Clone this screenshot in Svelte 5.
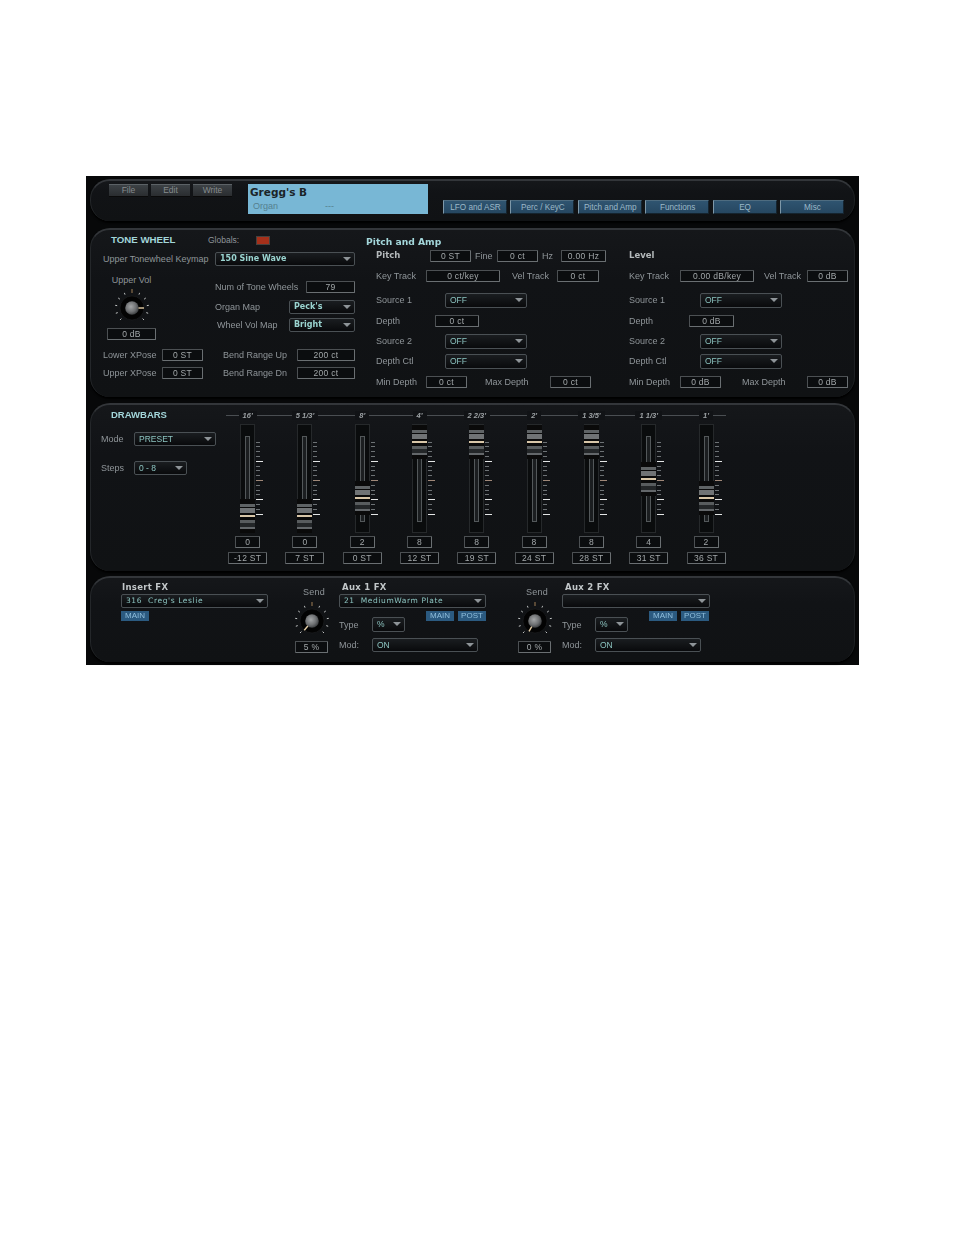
<script>
    const tabs = ['LFO and ASR', 'Perc / KeyC', 'Pitch and Amp', 'Functions', 'EQ', 'Misc'];
    const ticks = Array.from({ length: 16 }, (_, i) => i);
    const dial = Array.from({ length: 11 }, (_, i) => -135 + i * 27);

    const drawbars = [
        { name: "16'", value: 0, st: '-12 ST' },
        { name: "5 1/3'", value: 0, st: '7 ST' },
        { name: "8'", value: 2, st: '0 ST' },
        { name: "4'", value: 8, st: '12 ST' },
        { name: "2 2/3'", value: 8, st: '19 ST' },
        { name: "2'", value: 8, st: '24 ST' },
        { name: "1 3/5'", value: 8, st: '28 ST' },
        { name: "1 1/3'", value: 4, st: '31 ST' },
        { name: "1'", value: 2, st: '36 ST' }
    ];

    // handle centre inside the 109px slot, 8 = top of travel
    const handleTop = (v) => 74.6 - v * 9.3;
</script>

{#snippet lab(text, w, ml = 0)}
    <span class="lab" style="width:{w}px;margin-left:{ml}px">{text}</span>
{/snippet}

{#snippet field(text, w)}
    <span class="field" style="width:{w}px">{text}</span>
{/snippet}

{#snippet select(text, w)}
    <span class="select" style="width:{w}px">{text}</span>
{/snippet}

{#snippet knob(angle)}
    <svg class="knob" width="40" height="40" viewBox="-20 -20 40 40">
        <defs>
            <radialGradient id="cap" cx="0.42" cy="0.4" r="0.65">
                <stop offset="0" stop-color="#a4a6a7" />
                <stop offset="0.6" stop-color="#6d6f71" />
                <stop offset="1" stop-color="#333537" />
            </radialGradient>
        </defs>
        {#each dial as a}
            <line
                x1="0" y1="-15" x2="0" y2={a === 0 ? -19 : -17}
                stroke={a === 0 ? '#b08a5c' : '#c9cccc'}
                stroke-width="0.9"
                transform="rotate({a})"
            />
        {/each}
        <circle r="12" fill="#030303" stroke="#1e2022" stroke-width="0.6" />
        <circle r="6.8" fill="url(#cap)" />
        <line x1="0" y1="-6.5" x2="0" y2="-12" stroke="#e6cfa6" stroke-width="1.4" transform="rotate({angle})" />
    </svg>
{/snippet}

{#snippet ampRows(k)}
    <div class="row">{@render lab('Key Track', k.keyL)}{@render field(k.key, 74)}{@render lab('Vel Track', k.velL, k.velM)}{@render field(k.vel, k.velW)}</div>
    <div class="row">{@render lab('Source 1', k.srcL)}{@render select('OFF', 82)}</div>
    <div class="row">{@render lab('Depth', k.depL)}{@render field(k.dep, k.depW)}</div>
    <div class="row">{@render lab('Source 2', k.srcL)}{@render select('OFF', 82)}</div>
    <div class="row">{@render lab('Depth Ctl', k.srcL)}{@render select('OFF', 82)}</div>
    <div class="row">{@render lab('Min Depth', k.keyL)}{@render field(k.dep, 41)}{@render lab('Max Depth', 65, k.maxM)}{@render field(k.dep, 41)}</div>
{/snippet}

<div class="page">
    <div class="synth">
        <!-- Patch bar -->
        <section class="panel top">
            <div class="menu">
                <span class="btn">File</span>
                <span class="btn">Edit</span>
                <span class="btn">Write</span>
            </div>
            <div class="display">
                <div class="patch">Gregg's B</div>
                <div class="cat"><span>Organ</span><span>---</span></div>
            </div>
            <div class="tabs">
                {#each tabs as t}
                    <span class="tab">{t}</span>
                {/each}
            </div>
        </section>

        <!-- Tone wheel, pitch and level -->
        <section class="panel tone">
            <div class="tw">
                <div class="tw-head">
                    <span class="title tw-title">TONE WHEEL</span>
                    <span class="lab globals">Globals:</span>
                    <span class="led"></span>
                </div>
                <div class="row keymap">
                    {@render lab('Upper Tonewheel Keymap', 113)}
                    <span class="select strong" style="width:140px">150 Sine Wave</span>
                </div>
                <div class="tw-mid">
                    <div class="vol">
                        <span class="lab vol-lab">Upper Vol</span>
                        {@render knob(90)}
                        {@render field('0 dB', 49)}
                    </div>
                    <div class="maps">
                        <div class="row">{@render lab('Num of Tone Wheels', 91)}{@render field('79', 49)}</div>
                        <div class="row">{@render lab('Organ Map', 74)}<span class="select strong" style="width:66px">Peck's</span></div>
                        <div class="row wheel">{@render lab('Wheel Vol Map', 72)}<span class="select strong" style="width:66px">Bright</span></div>
                    </div>
                </div>
                <div class="row xpose">{@render lab('Lower XPose', 60)}{@render field('0 ST', 41)}{@render lab('Bend Range Up', 74, 20)}{@render field('200 ct', 58)}</div>
                <div class="row xpose">{@render lab('Upper XPose', 60)}{@render field('0 ST', 41)}{@render lab('Bend Range Dn', 74, 20)}{@render field('200 ct', 58)}</div>
            </div>

            <div class="pitch">
                <div class="title sub pitch-title">Pitch and Amp</div>
                <div class="amp">
                    <div class="row">
                        <span class="head" style="width:54px">Pitch</span>
                        {@render field('0 ST', 41)}
                        {@render lab('Fine', 22, 4)}
                        {@render field('0 ct', 41)}
                        {@render lab('Hz', 19, 4)}
                        {@render field('0.00 Hz', 45)}
                    </div>
                    {@render ampRows({ keyL: 50, key: '0 ct/key', velL: 45, velM: 12, vel: '0 ct', velW: 42, srcL: 69, depL: 59, dep: '0 ct', depW: 44, maxM: 18 })}
                </div>
            </div>

            <div class="level">
                <div class="amp">
                    <div class="row"><span class="head">Level</span></div>
                    {@render ampRows({ keyL: 51, key: '0.00 dB/key', velL: 43, velM: 10, vel: '0 dB', velW: 41, srcL: 71, depL: 60, dep: '0 dB', depW: 45, maxM: 21 })}
                </div>
            </div>
        </section>

        <!-- Drawbars -->
        <section class="panel bars">
            <div class="bars-left">
                <div class="title bars-title">DRAWBARS</div>
                <div class="row mode">{@render lab('Mode', 33)}{@render select('PRESET', 82)}</div>
                <div class="row steps">{@render lab('Steps', 33)}{@render select('0 - 8', 53)}</div>
            </div>
            <div class="bars-grid">
                {#each drawbars as d}
                    <span class="bar-name"><i>{d.name}</i></span>
                {/each}
                {#each drawbars as d}
                    <div class="fader">
                        <div class="slot">
                            <div class="rail"></div>
                            <div class="ticks">
                                {#each ticks as t}
                                    <span class="tick" class:major={t === 4 || t === 12 || t === 15} class:mid={t === 8}></span>
                                {/each}
                            </div>
                            <div class="handle" style="top:{handleTop(d.value)}px"></div>
                        </div>
                        {@render field(String(d.value), 25)}
                        <span class="st">{@render field(d.st, 39)}</span>
                    </div>
                {/each}
            </div>
        </section>

        <!-- Effects -->
        <section class="panel fx">
            <div class="fx-col insert">
                <div class="fx-title">Insert FX</div>
                <span class="select fx-sel" style="width:147px">316&nbsp; Creg's Leslie</span>
                <div class="tags left"><span class="tag">MAIN</span></div>
            </div>

            <div class="send first">
                <span class="lab send-lab">Send</span>
                {@render knob(-140)}
                {@render field('5 %', 33)}
            </div>

            <div class="fx-col aux">
                <div class="fx-title">Aux 1 FX</div>
                <span class="select fx-sel" style="width:147px">21&nbsp; MediumWarm Plate</span>
                <div class="tags"><span class="tag">MAIN</span><span class="tag">POST</span></div>
                <div class="row type">{@render lab('Type', 33)}{@render select('%', 33)}</div>
                <div class="row modrow">{@render lab('Mod:', 33)}{@render select('ON', 106)}</div>
            </div>

            <div class="send second">
                <span class="lab send-lab">Send</span>
                {@render knob(-150)}
                {@render field('0 %', 33)}
            </div>

            <div class="fx-col aux">
                <div class="fx-title">Aux 2 FX</div>
                <span class="select fx-sel" style="width:148px"></span>
                <div class="tags"><span class="tag">MAIN</span><span class="tag">POST</span></div>
                <div class="row type">{@render lab('Type', 33)}{@render select('%', 33)}</div>
                <div class="row modrow">{@render lab('Mod:', 33)}{@render select('ON', 106)}</div>
            </div>
        </section>
    </div>
</div>

<style>
    :global(body) {
        margin: 0;
        background: #fff;
    }

    .page {
        height: 1235px;
        padding: 176px 0 0 86px;
        box-sizing: border-box;
        font-family: "Liberation Sans", Arial, sans-serif;
    }

    .synth {
        width: 773px;
        height: 489px;
        box-sizing: border-box;
        padding: 3px 4px;
        background: #070809;
        display: flex;
        flex-direction: column;
        filter: blur(0.35px);
    }

    .panel {
        width: 765px;
        box-sizing: border-box;
        display: flex;
        border-top: 2px solid #33363a;
        border-left: 1px solid #24272a;
        border-right: 1px solid #1d2023;
        border-radius: 20px;
        background: linear-gradient(#15171a, #111316 30%, #101214);
        box-shadow: 0 2px 2px #000;
    }

    .top { height: 42px; padding: 3px 0 0 18px; }
    .tone { height: 169px; margin-top: 7px; padding: 4px 0 0 11px; }
    .bars { height: 169px; margin-top: 6px; padding: 4px 0 0 10px; }
    .fx { height: 86px; margin-top: 5px; padding: 3px 0 0 30px; }

    /* shared controls */
    .lab {
        flex: none;
        font-size: 9px;
        line-height: 12px;
        color: #8f9599;
        white-space: nowrap;
    }

    .field {
        flex: none;
        box-sizing: border-box;
        height: 12px;
        border: 1px solid #4c5053;
        border-right-color: #6a6f72;
        border-bottom-color: #6a6f72;
        border-radius: 1px;
        background: #0b0d0f;
        color: #a3a8aa;
        font-size: 8.5px;
        letter-spacing: 0.3px;
        line-height: 10px;
        text-align: center;
        white-space: nowrap;
    }

    .select {
        flex: none;
        position: relative;
        box-sizing: border-box;
        height: 14px;
        padding-left: 4px;
        border: 1px solid #4a5054;
        border-radius: 2px;
        background: linear-gradient(#1a1d20, #090a0c);
        color: #8cc4c0;
        font-size: 8.5px;
        line-height: 12px;
        white-space: nowrap;
    }

    .select::after {
        content: '';
        position: absolute;
        top: 4px;
        right: 3px;
        border-left: 4px solid transparent;
        border-right: 4px solid transparent;
        border-top: 4px solid #8e9498;
    }

    .strong {
        font-family: "DejaVu Sans", sans-serif;
        font-weight: 700;
        font-size: 8px;
        color: #9ad4d0;
    }

    .row {
        display: flex;
        align-items: flex-start;
    }

    .title {
        font-weight: 700;
        font-size: 9.7px;
        line-height: 13px;
        color: #a3d6da;
    }

    .sub {
        font-family: "DejaVu Sans", sans-serif;
        font-size: 9.2px;
    }

    /* patch bar */
    .menu {
        display: flex;
        gap: 3px;
    }

    .btn {
        box-sizing: border-box;
        width: 39px;
        height: 13px;
        background: linear-gradient(#3c4145, #2a2d30);
        border-top: 1px solid #5c6266;
        border-bottom: 1px solid #0a0a0a;
        color: #858b8e;
        font-size: 8.5px;
        line-height: 11px;
        text-align: center;
    }

    .display {
        box-sizing: border-box;
        width: 180px;
        height: 30px;
        margin-left: 16px;
        padding: 1px 2px 0 2px;
        background: #78b7d5;
    }

    .patch {
        font-family: "DejaVu Sans", sans-serif;
        font-weight: 700;
        font-size: 10.5px;
        line-height: 15px;
        color: #1b2428;
    }

    .cat {
        display: flex;
        gap: 47px;
        padding-left: 3px;
        font-size: 9px;
        line-height: 13px;
        color: #55808f;
    }

    .tabs {
        display: flex;
        gap: 3.4px;
        margin: 16px 0 0 15px;
    }

    .tab {
        box-sizing: border-box;
        width: 64px;
        height: 14px;
        padding-left: 1px;
        background: linear-gradient(#2f5470, #264761);
        border: 1px solid #15242f;
        border-left: 1px solid #7f98a8;
        border-top: 1px solid #4e6c80;
        color: #9cb9c8;
        font-size: 8.2px;
        line-height: 13px;
        text-align: center;
        white-space: nowrap;
    }

    /* tone wheel column */
    .tw { width: 253px; flex: none; }

    .tw-head {
        display: flex;
        align-items: center;
        height: 13px;
        padding-left: 9px;
    }

    .tw-title { width: 97px; margin-top: -1px; }
    .globals { width: 48px; font-size: 8.5px; }

    .led {
        width: 14px;
        height: 9px;
        box-sizing: border-box;
        border: 1px solid #46413e;
        background: #a5301a;
    }

    .keymap { margin-top: 5px; align-items: center; }
    .keymap .lab, .xpose .lab:first-child { text-indent: 1px; }

    .tw-mid {
        display: flex;
        margin-top: 7px;
        height: 70px;
    }

    .vol {
        width: 49px;
        margin: 0 59px 0 5px;
        display: flex;
        flex-direction: column;
        align-items: center;
    }

    .vol-lab { height: 15px; line-height: 14px; }

    .knob {
        flex: none;
        display: block;
        margin: 0 -4px;
    }

    .maps {
        padding-top: 8px;
        display: grid;
        grid-template-rows: 19px 18px 14px;
        align-content: start;
    }

    .maps .row { align-items: center; height: 14px; }
    .maps .row:first-child { height: 12px; }
    .wheel { padding-left: 2px; }

    .xpose {
        height: 12px;
        margin-top: 6px;
    }

    /* pitch and level columns */
    .pitch {
        width: 263px;
        flex: none;
        margin-left: 11px;
    }

    .pitch-title { margin-top: 1px; height: 15px; }

    .level {
        flex: none;
        padding-top: 16px;
    }

    .pitch .amp { padding-left: 10px; }

    .amp {
        display: grid;
        grid-template-rows: 20px 23px 22px 19px 20px 22px 12px;
    }

    .amp .row {
        align-self: start;
        align-items: center;
    }

    .amp .select { height: 15px; }

    .head {
        flex: none;
        font-family: "DejaVu Sans", sans-serif;
        font-weight: 700;
        font-size: 8.5px;
        line-height: 11px;
        color: #b4b9bb;
    }

    /* drawbars */
    .bars-left { width: 125px; flex: none; }

    .bars-title {
        margin-left: 10px;
        font-size: 9.5px;
        line-height: 11px;
    }

    .mode { margin-top: 12px; align-items: center; }
    .steps { margin-top: 15px; align-items: center; }

    .bars-grid {
        flex: none;
        margin-left: -7px;
        display: grid;
        grid-template-columns: repeat(9, 57.3px);
        grid-template-rows: 15px auto;
        justify-items: center;
        background: linear-gradient(#4a4e52, #4a4e52) no-repeat 7px 6px / 500px 1px;
        align-content: start;
    }

    .bar-name {
        height: 13px;
        font-size: 7.5px;
        line-height: 13px;
        color: #9ca1a4;
    }

    .bar-name i {
        padding: 0 4px;
        background: #111316;
        font-weight: 700;
    }

    .fader {
        display: flex;
        flex-direction: column;
        align-items: center;
    }

    .slot {
        position: relative;
        box-sizing: border-box;
        width: 15px;
        height: 109px;
        margin-bottom: 3px;
        background: #0a0c0d;
        border: 1px solid #26292b;
    }

    .rail {
        position: absolute;
        left: 4px;
        top: 11px;
        width: 5px;
        height: 86px;
        box-sizing: border-box;
        border: 1px solid #53585a;
        background: #1b1e20;
    }

    .ticks {
        position: absolute;
        left: 14px;
        top: 17px;
        display: flex;
        flex-direction: column;
        gap: 3.8px;
    }

    .tick {
        display: block;
        width: 4px;
        height: 1px;
        margin-left: 1px;
        background: #6d7275;
    }

    .tick.major { width: 7px; background: #e4e6e6; }
    .tick.mid { width: 7px; background: #a08878; }

    .handle {
        position: absolute;
        left: -1px;
        width: 15px;
        height: 34px;
        background: linear-gradient(
            #0a0a0a 0 5px,
            #5f6365 5px 8px,
            #0a0a0a 8px 9px,
            #707375 9px 14px,
            #0a0a0a 14px 16px,
            #d8c6a8 16px 18px,
            #0a0a0a 18px 21px,
            #585c5e 21px 24px,
            #232628 24px 28px,
            #63676a 28px 30px,
            #0a0a0a 30px
        );
    }

    .st { margin-top: 4px; display: flex; }

    /* effects */
    .fx-col { flex: none; width: 147px; }

    .fx-title {
        height: 13px;
        font-family: "DejaVu Sans", sans-serif;
        font-weight: 700;
        font-size: 8.5px;
        line-height: 12px;
        color: #c2c7c9;
        letter-spacing: 0.3px;
        padding-left: 1px;
    }

    .aux .fx-title { padding-left: 3px; }

    .fx-sel {
        display: block;
        font-family: "DejaVu Sans", sans-serif;
        font-size: 7.5px;
        letter-spacing: 0.6px;
    }

    .tags {
        display: flex;
        justify-content: flex-end;
        gap: 4px;
        margin: 3px 0 -4px;
    }

    .tags.left { justify-content: flex-start; }

    .tag {
        box-sizing: border-box;
        width: 28px;
        height: 10px;
        background: #2b5a80;
        color: #90bfdc;
        font-size: 8px;
        line-height: 10px;
        text-align: center;
    }

    .type { align-items: center; }
    .type .select { height: 15px; }
    .modrow { margin-top: 6px; align-items: center; }

    .send {
        flex: none;
        width: 33px;
        display: flex;
        flex-direction: column;
        align-items: center;
    }

    .send.first { margin: 0 11px 0 27px; }
    .send.second { margin: 0 11px 0 32px; }

    .send-lab {
        height: 20px;
        line-height: 22px;
        letter-spacing: 0.3px;
        margin-left: 5px;
    }
</style>
